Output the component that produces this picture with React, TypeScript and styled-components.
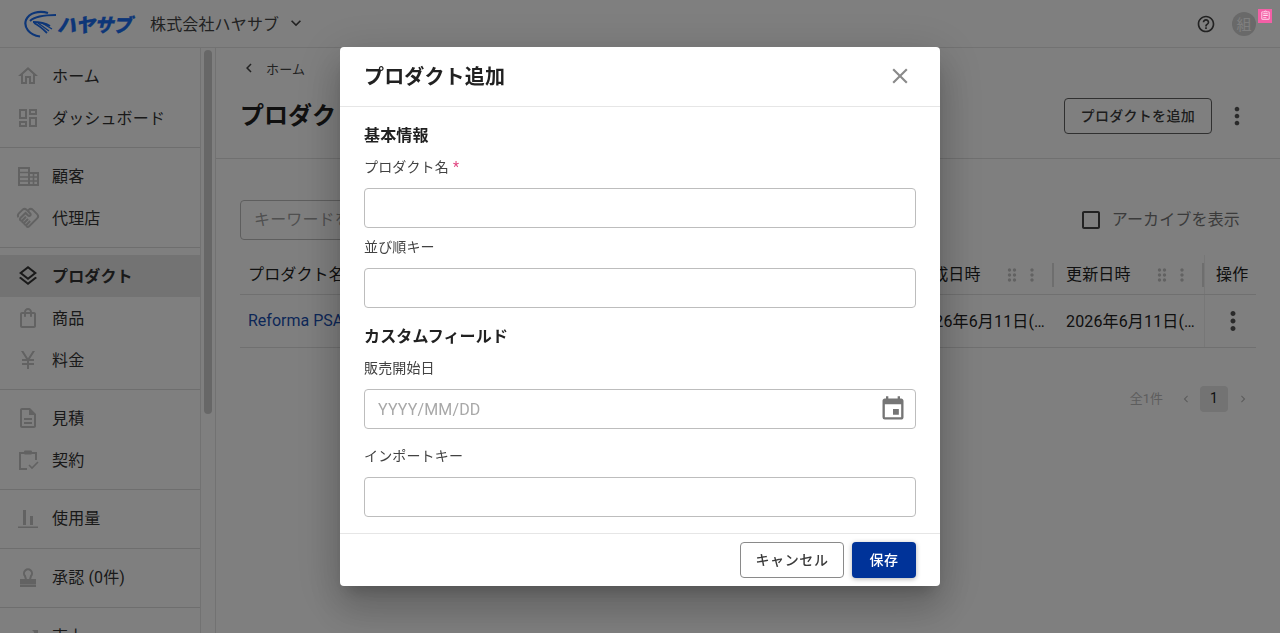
import styled, { createGlobalStyle } from "styled-components";
import type { ReactNode } from "react";
import {
  MdOutlineHome,
  MdOutlineDashboard,
  MdOutlineHandshake,
  MdOutlineLayers,
  MdOutlineShoppingBag,
  MdCurrencyYen,
  MdOutlineDescription,
  MdTrendingUp,
  MdHelpOutline,
  MdMoreVert,
  MdClose,
  MdEvent,
  MdDragIndicator,
  MdCheckBoxOutlineBlank,
  MdChevronLeft,
  MdChevronRight,
  MdKeyboardArrowDown,
  MdOutlineAssignment,
} from "react-icons/md";

const FONT = `Roboto, "Noto Sans CJK JP", sans-serif`;

const GlobalStyle = createGlobalStyle`
  html, body {
    margin: 0;
    height: 100%;
    overflow: hidden;
    background: #fff;
    font-family: ${FONT};
    color: #212121;
  }
  * {
    box-sizing: border-box;
  }
`;

const Page = styled.div`
  height: 100vh;
  display: flex;
  flex-direction: column;
`;

const Header = styled.header`
  height: 48px;
  flex: none;
  display: flex;
  align-items: center;
  padding: 0 24px;
  border-bottom: 1px solid #e4e4e4;
`;

const Logo = styled.div`
  display: flex;
  align-items: center;
  width: 126px;
  color: #1a6cf0;
`;

const LogoText = styled.span`
  font-size: 19px;
  font-weight: 900;
  font-style: italic;
  letter-spacing: -0.4px;
  -webkit-text-stroke: 0.3px currentColor;
`;

const Company = styled.div`
  display: flex;
  align-items: center;
  font-size: 16px;
  letter-spacing: 0.15px;
  gap: 7px;
  padding-bottom: 2px;
  color: #444;
`;

const HeaderRight = styled.div`
  margin-left: auto;
  display: flex;
  align-items: center;
  gap: 16px;
  color: #444;
`;

const HelpIcon = styled.div`
  display: flex;
`;

const Avatar = styled.div`
  position: relative;
  width: 24px;
  height: 24px;
  border-radius: 50%;
  background: #d2d2d2;
  color: #fff;
  font-size: 15px;
  display: flex;
  align-items: center;
  justify-content: center;
`;

const Badge = styled.div`
  position: absolute;
  top: -3px;
  left: 26px;
  width: 14px;
  height: 14px;
  background: #f45fa6;
  color: #fde;
  display: flex;
  align-items: center;
  justify-content: center;
  z-index: 1400;
`;

const Body = styled.div`
  flex: 1;
  display: flex;
  min-height: 0;
`;

const Sidebar = styled.nav`
  width: 201px;
  flex: none;
  overflow: hidden;
  border-right: 1px solid #e4e4e4;
`;

const NavGroup = styled.div<{ $bottom: number }>`
  padding: 7px 0 ${(p) => p.$bottom}px;
  border-bottom: 1px solid #dcdcdc;
`;

const NavItem = styled.div<{ $active?: boolean }>`
  height: 42px;
  display: flex;
  align-items: center;
  gap: 12px;
  padding-left: 16px;
  font-size: 16px;
  letter-spacing: 0.15px;
  font-weight: ${(p) => (p.$active ? 700 : 400)};
  background: ${(p) => (p.$active ? "#e6e6e6" : "transparent")};
  color: #333;

  & svg {
    color: ${(p) => (p.$active ? "#333" : "#c4c4c4")};
    flex: none;
  }
`;

const NavLabel = styled.span`
  padding-bottom: 2px;
`;

const ScrollTrack = styled.div`
  width: 15px;
  flex: none;
  padding: 2px 3px 0;
  border-right: 1px solid #e4e4e4;
`;

const ScrollThumb = styled.div`
  width: 8px;
  height: 364px;
  border-radius: 4px;
  background: #cfcfcf;
`;

const Main = styled.main`
  flex: 1;
  min-width: 0;
`;

const MainHead = styled.div`
  height: 111px;
  padding: 9px 24px 0;
  border-bottom: 1px solid #e0e0e0;
`;

const Crumb = styled.div`
  display: flex;
  align-items: center;
  gap: 8px;
  height: 22px;
  font-size: 13px;
  letter-spacing: 0.15px;
  color: #444;
  margin-bottom: 19px;
`;

const TitleRow = styled.div`
  display: flex;
  align-items: center;
  height: 36px;
`;

const Title = styled.h1`
  margin: 0;
  padding-bottom: 6px;
  font-size: 24px;
  font-weight: 700;
`;

const OutlineButton = styled.button`
  height: 36px;
  padding: 0 16px 2px;
  border: 1px solid #616161;
  border-radius: 4px;
  background: #fff;
  color: #3a3a3a;
  font-family: ${FONT};
  font-size: 14px;
  font-weight: 500;
  letter-spacing: 0.3px;
`;

const AddButton = styled(OutlineButton)`
  margin-left: auto;
`;

const MoreButton = styled.div`
  width: 28px;
  margin-left: 11px;
  margin-right: 5px;
  display: flex;
  color: #555;
`;

const Content = styled.div`
  padding: 41px 24px 0;
`;

const Toolbar = styled.div`
  display: flex;
  align-items: center;
  height: 40px;
  margin-bottom: 15px;
`;

const SearchBox = styled.div`
  width: 400px;
  height: 40px;
  border: 1px solid #bdbdbd;
  border-radius: 4px;
  padding: 0 13px 4px;
  display: flex;
  align-items: center;
  font-size: 16px;
  letter-spacing: 0.15px;
  color: #a0a0a0;
`;

const ArchiveToggle = styled.div`
  margin-left: auto;
  margin-right: 16px;
  display: flex;
  align-items: center;
  gap: 9px;
  font-size: 16px;
  letter-spacing: 0.15px;
  color: #777;

  & svg {
    color: #444;
  }
`;

const ArchiveLabel = styled.span`
  padding-bottom: 4px;
`;

const Row = styled.div<{ $height: number }>`
  display: grid;
  grid-template-columns: 1fr 150px 150px 2px 50px;
  height: ${(p) => p.$height}px;
  border-bottom: 1px solid #e0e0e0;
  align-items: center;
  font-size: 16px;
`;

const Cell = styled.div`
  padding: 0 8px 2px;
  min-width: 0;
`;

const HeadCell = styled.div<{ $first?: boolean; $tinted?: boolean }>`
  display: flex;
  align-items: center;
  padding: 0 12px 0 ${(p) => (p.$first ? 8 : 12)}px;
  color: #222;
  height: 24px;
  letter-spacing: 0.15px;
  border-right: ${(p) => (p.$tinted ? "2px solid #dddddd" : "none")};
`;

const HeadText = styled.span`
  padding-bottom: 3px;
`;

const HeadIcons = styled.div`
  margin-left: auto;
  display: flex;
  align-items: center;
  gap: 0;
  margin-right: -2px;
  color: #c4c4c4;
`;

const DateCell = styled(Cell)`
  padding: 0 8px 2px 12px;
  white-space: nowrap;
  overflow: hidden;
  text-overflow: ellipsis;
  letter-spacing: 0.15px;
`;

const NameLink = styled.span`
  color: #1a4fb0;
`;

const ActionHead = styled.div`
  padding: 0 0 3px 10px;
  letter-spacing: 0.15px;
`;

const ActionDivider = styled.div`
  width: 1px;
  height: 100%;
  background: #eeeeee;
`;

const ActionCell = styled.div`
  display: flex;
  justify-content: center;
  margin-left: 4px;
  color: #555;
`;

const Pagination = styled.div`
  display: flex;
  align-items: center;
  justify-content: flex-end;
  height: 26px;
  margin-top: 38px;
  padding-right: 6px;
  font-size: 13px;
  color: #bbb;
`;

const PageCount = styled.span`
  margin-right: 16px;
  padding-bottom: 4px;
`;

const PageNumber = styled.div`
  width: 28px;
  height: 26px;
  margin: 0 8px 0 7px;
  padding-bottom: 2px;
  border-radius: 4px;
  background: #e6e6e6;
  color: #222;
  font-size: 14px;
  display: flex;
  align-items: center;
  justify-content: center;
`;

const Overlay = styled.div`
  position: fixed;
  inset: 0;
  z-index: 1300;
  background: rgba(0, 0, 0, 0.5);
  display: flex;
  align-items: center;
  justify-content: center;
`;

const Dialog = styled.div`
  width: 600px;
  height: 539px;
  display: flex;
  flex-direction: column;
  background: #fff;
  border-radius: 4px;
  box-shadow: 0 11px 15px -7px rgba(0, 0, 0, 0.2),
    0 24px 38px 3px rgba(0, 0, 0, 0.14), 0 9px 46px 8px rgba(0, 0, 0, 0.12);
`;

const DialogHead = styled.div`
  height: 60px;
  flex: none;
  display: flex;
  align-items: center;
  justify-content: space-between;
  padding: 0 27px 2px 24px;
  border-bottom: 1px solid #e6e6e6;
`;

const DialogTitle = styled.h2`
  margin: 0;
  font-size: 20px;
  font-weight: 700;
  letter-spacing: 0.15px;
  color: #212121;
`;

const CloseIcon = styled.div`
  display: flex;
  color: #8a8a8a;
`;

const DialogBody = styled.div`
  flex: 1;
  min-height: 0;
  overflow: hidden;
  padding: 17px 24px 0;
`;

const SectionTitle = styled.h3<{ $top?: number }>`
  margin: ${(p) => p.$top ?? 0}px 0 0;
  font-size: 16px;
  line-height: 24px;
  font-weight: 700;
  letter-spacing: 0.15px;
  color: #212121;
`;

const Field = styled.div<{ $top: number }>`
  margin-top: ${(p) => p.$top}px;
`;

const Label = styled.label<{ $gap: number }>`
  display: block;
  font-size: 14px;
  line-height: 21px;
  letter-spacing: 0.15px;
  color: #424242;
  margin-bottom: ${(p) => p.$gap}px;
`;

const Required = styled.span`
  color: #e0437f;
  margin-left: 4px;
`;

const InputBox = styled.div`
  height: 40px;
  display: flex;
  align-items: center;
  justify-content: space-between;
  padding: 0 8px 0 13px;
  border: 1px solid #bdbdbd;
  border-radius: 4px;
  font-size: 16px;
  letter-spacing: 0.15px;
  color: #a8a8a8;

  & svg {
    color: #757575;
  }
`;

const DialogFoot = styled.div`
  height: 53px;
  flex: none;
  display: flex;
  align-items: center;
  justify-content: flex-end;
  gap: 8px;
  padding: 0 24px;
  border-top: 1px solid #e6e6e6;
`;

const CancelButton = styled(OutlineButton)`
  width: 104px;
  padding: 0 0 2px;
  border-color: #8a8a8a;
  letter-spacing: 0.6px;
`;

const SaveButton = styled.button`
  width: 64px;
  height: 36px;
  padding: 0 0 2px;
  border: none;
  border-radius: 4px;
  background: #003399;
  color: #fff;
  font-family: ${FONT};
  font-size: 14px;
  font-weight: 500;
  letter-spacing: 0.4px;
  box-shadow: 0 1px 5px rgba(0, 0, 0, 0.3);
`;

function LogoMark() {
  return (
    <svg width="33" height="28" viewBox="0 0 33 28" fill="none" stroke="currentColor">
      <path d="M24 3C15 0 5 3 2 10C-0.5 17 5 25 16 26.5" strokeWidth="2.2" />
      <path d="M6 11C10 7 20 5 32 5" strokeWidth="2" />
      <path d="M9 12C14 12 21 13 26 16" strokeWidth="2" />
      <path d="M10 13C14 15 19 19 23 23" strokeWidth="1.8" />
      <path d="M14 13L25 21M18 13L28 19" strokeWidth="1.4" />
    </svg>
  );
}

function BuildingIcon() {
  return (
    <svg width="24" height="24" viewBox="0 0 24 24" fill="none" stroke="currentColor" strokeWidth="2">
      <path d="M3 21V4h10v17M13 9h9v12H2" />
      <path d="M4 8.5h8M4 13h8M4 17h8M14 13h7M14 17h7M17.5 10v10" strokeWidth="1.6" />
    </svg>
  );
}

function ContractIcon() {
  return (
    <svg width="24" height="24" viewBox="0 0 24 24" fill="none" stroke="currentColor" strokeWidth="2">
      <path d="M8 5H4v16h7" />
      <path d="M16 5h4v7" />
      <rect x="8" y="2.5" width="8" height="4" rx="1" fill="currentColor" stroke="none" />
      <path d="M13 17l3 3 6-6" strokeWidth="1.6" />
    </svg>
  );
}

function UsageIcon() {
  return (
    <svg width="24" height="24" viewBox="0 0 24 24" fill="currentColor">
      <rect x="7" y="4" width="3" height="15" />
      <rect x="14" y="10" width="3" height="9" />
      <rect x="2" y="20.5" width="20" height="1.5" />
    </svg>
  );
}

function StampIcon() {
  return (
    <svg width="24" height="24" viewBox="0 0 24 24" fill="none" stroke="currentColor" strokeWidth="2">
      <path d="M10 14.5 9 11a4 4 0 1 1 6 0l-1 3.5" />
      <path d="M5 15h14v3H5z" fill="currentColor" />
      <rect x="4" y="19.5" width="16" height="2.5" fill="currentColor" stroke="none" />
    </svg>
  );
}

type NavEntry = { icon: ReactNode; label: string; active?: boolean };

const navGroups: { bottom: number; items: NavEntry[] }[] = [
  {
    bottom: 8,
    items: [
      { icon: <MdOutlineHome size={24} />, label: "ホーム" },
      { icon: <MdOutlineDashboard size={24} />, label: "ダッシュボード" },
    ],
  },
  {
    bottom: 8,
    items: [
      { icon: <BuildingIcon />, label: "顧客" },
      { icon: <MdOutlineHandshake size={24} />, label: "代理店" },
    ],
  },
  {
    bottom: 8,
    items: [
      { icon: <MdOutlineLayers size={24} />, label: "プロダクト", active: true },
      { icon: <MdOutlineShoppingBag size={24} />, label: "商品" },
      { icon: <MdCurrencyYen size={24} />, label: "料金" },
    ],
  },
  {
    bottom: 8,
    items: [
      { icon: <MdOutlineDescription size={24} />, label: "見積" },
      { icon: <ContractIcon />, label: "契約" },
    ],
  },
  { bottom: 9, items: [{ icon: <UsageIcon />, label: "使用量" }] },
  { bottom: 9, items: [{ icon: <StampIcon />, label: "承認 (0件)" }] },
  { bottom: 8, items: [{ icon: <MdTrendingUp size={24} />, label: "売上" }] },
];

function HeadMenu() {
  return (
    <HeadIcons>
      <MdDragIndicator size={20} />
      <MdMoreVert size={20} />
    </HeadIcons>
  );
}

export default function App() {
  return (
    <>
      <GlobalStyle />
      <Page>
        <Header>
          <Logo>
            <LogoMark />
            <LogoText>ハヤサブ</LogoText>
          </Logo>
          <Company>
            株式会社ハヤサブ
            <MdKeyboardArrowDown size={20} />
          </Company>
          <HeaderRight>
            <HelpIcon>
              <MdHelpOutline size={20} />
            </HelpIcon>
            <Avatar>
              組
              <Badge>
                <MdOutlineAssignment size={11} />
              </Badge>
            </Avatar>
          </HeaderRight>
        </Header>
        <Body>
          <Sidebar>
            {navGroups.map((group, i) => (
              <NavGroup key={i} $bottom={group.bottom}>
                {group.items.map((item) => (
                  <NavItem key={item.label} $active={item.active}>
                    {item.icon}
                    <NavLabel>{item.label}</NavLabel>
                  </NavItem>
                ))}
              </NavGroup>
            ))}
          </Sidebar>
          <ScrollTrack>
            <ScrollThumb />
          </ScrollTrack>
          <Main>
            <MainHead>
              <Crumb>
                <MdChevronLeft size={18} />
                ホーム
              </Crumb>
              <TitleRow>
                <Title>プロダクト</Title>
                <AddButton>プロダクトを追加</AddButton>
                <MoreButton>
                  <MdMoreVert size={28} />
                </MoreButton>
              </TitleRow>
            </MainHead>
            <Content>
              <Toolbar>
                <SearchBox>キーワードを入力</SearchBox>
                <ArchiveToggle>
                  <MdCheckBoxOutlineBlank size={24} />
                  <ArchiveLabel>アーカイブを表示</ArchiveLabel>
                </ArchiveToggle>
              </Toolbar>
              <Row $height={40}>
                <HeadCell $first>
                  <HeadText>プロダクト名</HeadText>
                </HeadCell>
                <HeadCell $tinted>
                  <HeadText>作成日時</HeadText>
                  <HeadMenu />
                </HeadCell>
                <HeadCell $tinted>
                  <HeadText>更新日時</HeadText>
                  <HeadMenu />
                </HeadCell>
                <ActionDivider />
                <ActionHead>操作</ActionHead>
              </Row>
              <Row $height={53}>
                <Cell>
                  <NameLink>Reforma PSA</NameLink>
                </Cell>
                <DateCell>2026年6月11日(木) 12:00</DateCell>
                <DateCell>2026年6月11日(木) 12:00</DateCell>
                <ActionDivider />
                <ActionCell>
                  <MdMoreVert size={30} />
                </ActionCell>
              </Row>
              <Pagination>
                <PageCount>全1件</PageCount>
                <MdChevronLeft size={14} />
                <PageNumber>1</PageNumber>
                <MdChevronRight size={14} />
              </Pagination>
            </Content>
          </Main>
        </Body>
      </Page>
      <Overlay>
        <Dialog>
          <DialogHead>
            <DialogTitle>プロダクト追加</DialogTitle>
            <CloseIcon>
              <MdClose size={26} />
            </CloseIcon>
          </DialogHead>
          <DialogBody>
            <SectionTitle>基本情報</SectionTitle>
            <Field $top={9}>
              <Label $gap={10}>
                プロダクト名<Required>*</Required>
              </Label>
              <InputBox />
            </Field>
            <Field $top={9}>
              <Label $gap={10}>並び順キー</Label>
              <InputBox />
            </Field>
            <SectionTitle $top={17}>カスタムフィールド</SectionTitle>
            <Field $top={9}>
              <Label $gap={10}>販売開始日</Label>
              <InputBox>
                YYYY/MM/DD
                <MdEvent size={28} />
              </InputBox>
            </Field>
            <Field $top={17}>
              <Label $gap={10}>インポートキー</Label>
              <InputBox />
            </Field>
          </DialogBody>
          <DialogFoot>
            <CancelButton>キャンセル</CancelButton>
            <SaveButton>保存</SaveButton>
          </DialogFoot>
        </Dialog>
      </Overlay>
    </>
  );
}
